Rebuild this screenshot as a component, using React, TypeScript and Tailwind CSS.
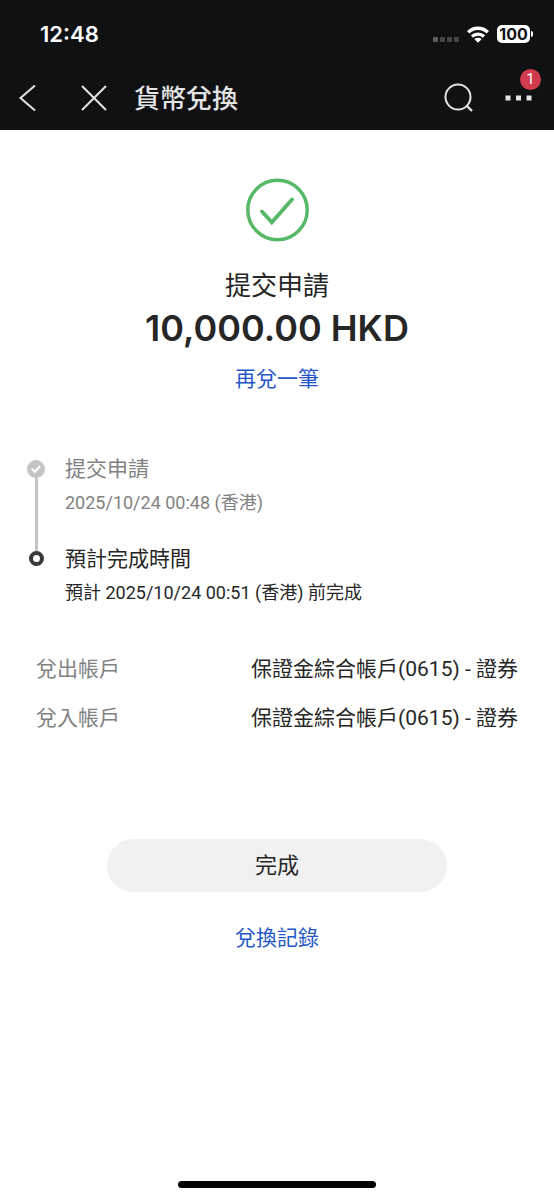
const accounts = [
  { label: '兌出帳戶', value: '保證金綜合帳戶(0615) - 證券' },
  { label: '兌入帳戶', value: '保證金綜合帳戶(0615) - 證券' },
];

function StatusBar() {
  return (
    <div className="flex h-17 items-center justify-between pl-10 pr-[21px] font-['Inter',sans-serif] text-white">
      <span className="text-[22px] leading-7 font-semibold">12:48</span>
      <div className="flex items-center gap-2">
        <svg width="26" height="20" viewBox="0 0 26 20" aria-hidden="true">
          <rect x="0" y="13" width="5" height="5" rx="1" fill="#5c5d5f" />
          <rect x="7" y="13" width="5" height="5" rx="1" fill="#444547" />
          <rect x="14" y="13" width="5" height="5" rx="1" fill="#444547" />
          <rect x="21" y="13" width="5" height="5" rx="1" fill="#444547" />
        </svg>
        <svg width="22" height="17" viewBox="0 0 22 17" fill="none" stroke="#fff" strokeWidth="3.3" aria-hidden="true">
          <path d="M1.2 6.2C6.8.9 15.2.9 20.8 6.2" />
          <path d="M5 10.5c3.5-3.1 8.500-3.100 12 0" />
          <path d="M11 16.800l-3.600-3.600c2-1.800 5.200-1.800 7.200 0z" fill="#fff" stroke="none" />
        </svg>
        <div className="flex items-center">
          <span className="flex h-[18px] w-[33px] items-center justify-center rounded-[5px] bg-white text-base leading-[18px] font-bold text-[#101113]">
            100
          </span>
          <span className="ml-px h-1.5 w-0.5 rounded-r-full bg-white" />
        </div>
      </div>
    </div>
  );
}

function NavBar() {
  return (
    <div className="flex h-[62px] items-center pb-0.5 pl-4 pr-[21px] text-[#e3e4e6]">
      <button type="button" aria-label="返回" className="flex w-6 justify-center">
        <svg width="20" height="28" viewBox="0 0 20 28" fill="none" stroke="currentColor" strokeWidth="2">
          <path d="M17 1.500L2.500 14 17 26.500" />
        </svg>
      </button>
      <button type="button" aria-label="關閉" className="ml-10 flex w-7 justify-center">
        <svg width="28" height="28" viewBox="0 0 28 28" fill="none" stroke="currentColor" strokeWidth="2">
          <path d="M2 2l24 24M26 2L2 26" />
        </svg>
      </button>
      <h1 className="ml-[26px] grow pt-0.5 text-[26px] leading-9 font-medium">貨幣兌換</h1>
      <button type="button" aria-label="搜尋">
        <svg width="30" height="30" viewBox="0 0 30 30" fill="none" stroke="currentColor" strokeWidth="2">
          <circle cx="14" cy="14" r="12.500" />
          <path d="M22.500 22.500l5.500 5.500" strokeWidth="2.400" />
        </svg>
      </button>
      <button type="button" aria-label="更多" className="relative ml-[31px] flex h-7 items-center">
        <svg width="28" height="6" viewBox="0 0 28 6" fill="currentColor">
          <path d="M.500.500h5v5h-5zM11 .500h5v5h-5zM21.500.500h5v5h-5z" />
        </svg>
        <span className="absolute -top-[15px] -right-2 flex size-[21px] items-center justify-center rounded-full bg-[#d23a4d] text-[15px] leading-none text-white">
          1
        </span>
      </button>
    </div>
  );
}

function Timeline() {
  return (
    <ol className="mt-[58px] pl-[27px]">
      <li className="flex gap-5">
        <div className="flex w-[18px] flex-col items-center pt-[7px]">
          <svg className="shrink-0" width="18" height="18" viewBox="0 0 18 18" fill="none" aria-hidden="true">
            <circle cx="9" cy="9" r="9" fill="#c4c4c4" />
            <path d="M4.800 8.800l3 3 5.400-5.600" stroke="#fff" strokeWidth="2" />
          </svg>
          <span className="w-[3px] grow bg-[#c4c4c4]" />
        </div>
        <div className="h-[90px] text-[#818181]">
          <h2 className="text-[21px] leading-8">提交申請</h2>
          <p className="mt-1.5 text-lg leading-6">2025/10/24 00:48 (香港)</p>
        </div>
      </li>
      <li className="flex gap-5">
        <div className="flex w-[18px] flex-col items-center">
          <span className="h-2 w-[3px] bg-[#c4c4c4]" />
          <span className="size-[15px] rounded-full border-4 border-[#393939]" />
        </div>
        <div className="text-[#262626]">
          <h2 className="text-[21px] leading-8">預計完成時間</h2>
          <p className="mt-1.5 text-lg leading-6">預計 2025/10/24 00:51 (香港) 前完成</p>
        </div>
      </li>
    </ol>
  );
}

export default function App() {
  return (
    <div className="flex min-h-screen flex-col bg-white font-['Roboto','Noto_Sans_CJK_TC',sans-serif] text-[#262626]">
      <header className="bg-[#101113]">
        <StatusBar />
        <NavBar />
      </header>

      <main className="flex grow flex-col">
        <section className="flex flex-col items-center pt-12">
          <svg width="64" height="64" viewBox="0 0 64 64" fill="none" stroke="#56b968" aria-hidden="true">
            <circle cx="32.500" cy="32" r="29.700" strokeWidth="3.500" />
            <path d="M17 33.500l9.800 10.800L47 21.500" strokeWidth="3.800" strokeLinecap="round" />
          </svg>
          <p className="mt-[26px] text-[26px] leading-9">提交申請</p>
          <p className="font-['Inter',sans-serif] text-[36px] leading-12 font-semibold">10,000.00 HKD</p>
          <a href="#again" className="mt-[11px] text-[21px] leading-8 text-[#2456c8]">
            再兌一筆
          </a>
        </section>

        <Timeline />

        <dl className="mt-12 flex flex-col gap-[17px] px-9 text-[21px] leading-8">
          {accounts.map((account) => (
            <div key={account.label} className="flex justify-between">
              <dt className="text-[#818181]">{account.label}</dt>
              <dd>{account.value}</dd>
            </div>
          ))}
        </dl>

        <div className="mt-[105px] flex flex-col items-center">
          <button type="button" className="h-[53px] w-8/13 rounded-full bg-[#f1f1f1] text-[22px] leading-8">
            完成
          </button>
          <a href="#records" className="mt-[30px] text-[21px] leading-8 text-[#2456c8]">
            兌換記錄
          </a>
        </div>
      </main>

      <footer className="flex justify-center pb-3">
        <span className="h-[7px] w-[198px] rounded-full bg-black" />
      </footer>
    </div>
  );
}
